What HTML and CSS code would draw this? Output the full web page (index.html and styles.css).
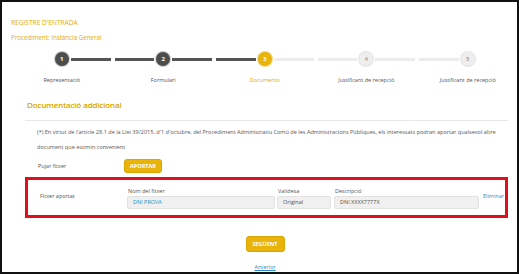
FILE: index.html
```html
<!DOCTYPE html>
<html lang="ca">
<head>
    <meta charset="UTF-8">
    <title>Registre d'entrada</title>
    <link rel="stylesheet" href="styles.css">
</head>
<body>
<div class="page">
    <div class="title">REGISTRE D'ENTRADA</div>
    <div class="subtitle">Procediment: Instància General</div>

    <div class="steps">
        <div class="step done">
            <div class="track"><span class="line none"></span><span class="dot">1</span><span class="line dark"></span></div>
            <div class="label">Representació</div>
        </div>
        <div class="step done">
            <div class="track"><span class="line dark"></span><span class="dot">2</span><span class="line dark"></span></div>
            <div class="label">Formulari</div>
        </div>
        <div class="step current">
            <div class="track"><span class="line dark"></span><span class="dot">3</span><span class="line light"></span></div>
            <div class="label">Documento</div>
        </div>
        <div class="step">
            <div class="track"><span class="line light"></span><span class="dot">4</span><span class="line light"></span></div>
            <div class="label">Justificant de recepció</div>
        </div>
        <div class="step">
            <div class="track"><span class="line light"></span><span class="dot">5</span><span class="line none"></span></div>
            <div class="label">Justificant de recepció</div>
        </div>
    </div>

    <div class="section">
        <h2>Documentació addicional</h2>
        <p class="note">(*) En virtut de l'article 28.1 de la Llei 39/2015, d'1 d'octubre, del Procediment Administratiu Comú de les Administracions Públiques, els interessats podran aportar qualsevol altre document que estimin convenient</p>

        <div class="upload-row">
            <span class="row-label">Pujar fitxer</span>
            <button class="btn">APORTAR</button>
        </div>

        <div class="file-box">
            <span class="row-label">Fitxer aportat</span>
            <div class="field name">
                <label>Nom del fitxer</label>
                <div class="input link">DNI PROVA</div>
            </div>
            <div class="field valid">
                <label>Validesa</label>
                <div class="input">Original</div>
            </div>
            <div class="field desc">
                <label>Descripció</label>
                <div class="input">DNI XXXX7777X</div>
            </div>
            <a class="remove" href="#">Eliminar</a>
        </div>
    </div>

    <div class="actions">
        <button class="btn big">SEGÜENT</button>
        <a class="back" href="#">Anterior</a>
    </div>
</div>
</body>
</html>
```

FILE: styles.css
```css
body {
    margin: 0;
    font-family: "Open Sans", "Noto Sans", sans-serif;
    color: #555;
    background: #fff;
}
.page {
    width: 519px;
    height: 274px;
    box-sizing: border-box;
    border: 2px solid #111;
    padding: 16px 0 0 0;
    overflow: hidden;
}
.title {
    font-size: 6.6px;
    color: #e3ad00;
    padding-left: 9px;
    line-height: 10px;
}
.subtitle {
    font-size: 6.2px;
    color: #e3ad00;
    padding-left: 9px;
    margin-top: 5px;
    line-height: 10px;
}
.steps {
    display: grid;
    grid-template-columns: repeat(5, 101.5px);
    padding-left: 9px;
    margin-top: 8px;
}
.track {
    display: flex;
    align-items: center;
    height: 16px;
}
.line {
    flex: 1;
    height: 3px;
    margin: 0 2px;
}
.line.dark {
    background: #555;
}
.line.light {
    background: #ececec;
}
.dot {
    width: 14px;
    height: 14px;
    border-radius: 50%;
    background: #eeeeee;
    color: #aaa;
    font-size: 6px;
    font-weight: 700;
    display: flex;
    align-items: center;
    justify-content: center;
    box-shadow: 0 0 0 1px #e6e6e6;
}
.done .dot {
    background: #4d4d4d;
    color: #fff;
    box-shadow: 0 0 0 1px #ccc;
}
.current .dot {
    background: #e8b40c;
    color: #fff;
    box-shadow: 0 0 0 1px #f3dc8a;
}
.label {
    text-align: center;
    font-size: 5.5px;
    margin-top: 9px;
    color: #555;
}
.current .label {
    color: #e3ad00;
}
.section {
    margin: 15px 9px 0 23px;
}
h2 {
    font-size: 8px;
    font-weight: 400;
    color: #e3ad00;
    margin: 0;
    padding: 0 0 9px 2px;
    border-bottom: 1px solid #e8e8e8;
    line-height: 12px;
    text-shadow: 0 0 0.3px #e3ad00;
}
.note {
    font-size: 5.55px;
    line-height: 15px;
    margin: 4px 0 0 12px;
    color: #555;
}
.upload-row {
    display: flex;
    align-items: center;
    margin-top: 3px;
    padding-left: 13px;
    height: 16px;
}
.row-label {
    font-size: 5.5px;
    width: 86px;
    flex-shrink: 0;
}
.btn {
    background: #e8b40c;
    color: #fff;
    border: 1px solid #d9a400;
    border-radius: 3px;
    font-family: inherit;
    font-size: 5.5px;
    font-weight: 700;
    padding: 0;
    width: 38px;
    height: 14px;
    cursor: pointer;
}
.file-box {
    display: flex;
    align-items: flex-end;
    border: 3px solid #e0101a;
    margin-top: 3px;
    height: 41px;
    box-sizing: border-box;
    padding: 0 0 6px 12px;
}
.file-box .row-label {
    align-self: center;
    padding-top: 2px;
    width: 87px;
}
.field label {
    display: block;
    font-size: 5.5px;
    margin-bottom: 1px;
    padding-left: 1px;
}
.input {
    background: #f0f0f0;
    border: 1px solid #e2e2e2;
    border-radius: 2px;
    height: 13px;
    box-sizing: border-box;
    font-size: 5.5px;
    line-height: 11px;
    padding-left: 5px;
}
.input.link {
    color: #2a8cc4;
}
.field.name {
    width: 148px;
    margin-right: 2px;
}
.field.valid {
    width: 54px;
    margin-right: 3px;
}
.field.desc {
    width: 145px;
    margin-right: 4px;
}
.remove {
    font-size: 5.5px;
    color: #2a8cc4;
    text-decoration: none;
    align-self: center;
    padding-top: 2px;
}
.actions {
    display: flex;
    flex-direction: column;
    align-items: center;
    margin-top: 18px;
    padding-left: 11px;
}
.btn.big {
    width: 39px;
    height: 16px;
    border-radius: 3px;
}
.back {
    margin-top: 11px;
    font-size: 5.5px;
    color: #2a8cc4;
}
```
